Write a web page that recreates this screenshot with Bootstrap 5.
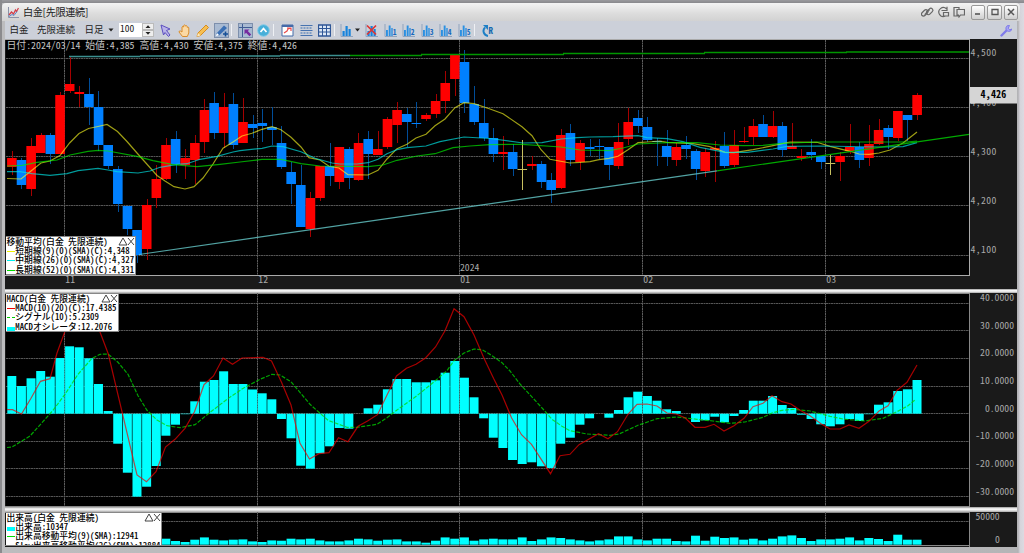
<!DOCTYPE html>
<html lang="ja">
<head>
  <meta charset="UTF-8" />
  <meta name="viewport" content="width=device-width, initial-scale=1.0" />
  <title>白金[先限連続]</title>
  <link href="https://cdn.jsdelivr.net/npm/bootstrap@5.3.0/dist/css/bootstrap.min.css" rel="stylesheet">
  <style>
    body { width: 1024px; height: 553px; overflow: hidden; font-family: "Noto Sans CJK JP", sans-serif; color: #222; line-height: 1; }
    .chart-window { height: 553px; padding: 3px 7px 6px 5px; background: linear-gradient(90deg, #8b8b8e 0, #8b8b8e 2px, #bcbcbe 2px, #bcbcbe 5px, #b5b5b7 1017px, #b2b2b5 1018px, #d5d3da 1020px, #dcdae1 100%); }
    .window-top { height: 3px; margin: -3px -7px 0 -3px; background: linear-gradient(#9a9a9e, #88888c); }
    .title-bar { height: 18px; margin: 0 -3px; padding: 0 2px 0 6px; background: linear-gradient(#f3f3f3, #dcdcdc 60%, #d2d2d2); border-radius: 4px 4px 0 0; }
    .title-text { font-size: 10.2px; letter-spacing: -.38px; margin-left: 4px; }
    .win-btn { width: 14.3px; height: 15px; border: 1px solid #999; border-radius: 2px; background: linear-gradient(#fff, #cfcfcf); margin-left: 2px; }
    .tool-bar { height: 18px; background: #ccd0d9; padding-left: 4.5px; font-size: 9.5px; }
    .tool-cell { width: 18.5px; height: 16px; flex: none; }
    .tool-cell.pressed > svg { background: #a9bad2; outline: 1px solid #7d8fac; }
    .tool-sep { width: 5.5px; height: 12px; flex: none; border-left: 1px solid #eef0f4; }
    .count-box { width: 23px; height: 14px; background: #fff; padding: 1px 0 0 1.5px; font-size: 9.5px; font-feature-settings: "hwid" 1; margin-left: 5px; }
    .pane { position: relative; flex: none; background: #1a1a1a; }
    .pane > svg { display: block; }
    .splitter { flex: none; background: linear-gradient(#999, #f4f4f4 35%, #f4f4f4 55%, #a8a8a8); }
    .half { font-feature-settings: "hwid" 1; }
    .legend-box { position: absolute; top: 0; left: 1px; padding-left: .5px; background: #fff; border: 1px solid #888; border-left: 0; color: #000; font-size: 8.8px; font-weight: 500; overflow: hidden; white-space: nowrap; }
    .legend-box > div { height: 9px; line-height: 9px; }
    .legend-box > div:nth-child(3) { height: 10px; line-height: 10px; }
    .legend-box .key { width: 8px; height: 1px; flex: none; margin: 5px .8px 0 0; }
    .legend-box .key.block { height: 4px; }
    svg text { font-family: "Noto Sans CJK JP", sans-serif; font-feature-settings: "hwid" 1; font-size: 9.7px; fill: #a8a8a8; white-space: pre; }
  </style>
</head>
<body>
  <div class="chart-window d-flex flex-column">
    <div class="window-top flex-shrink-0"></div>

    <div class="title-bar d-flex align-items-center flex-shrink-0">
      <svg width="11" height="11" viewBox="0 0 11 11"><path d="M.5 0v10.500h10.500" fill="none" stroke="#8b93a8"/><path d="M1 8l2.500-3 2 2 2-4 1 1.500 2-3.500" fill="none" stroke="#d33b45" stroke-width="1.200"/><path d="M1 9.500l3-2 2 1 3-4" fill="none" stroke="#5a8fd0"/></svg>
      <span class="title-text">白金[先限連続]</span>
      <svg class="ms-auto" width="44" height="12" viewBox="0 0 44 12" fill="none" stroke="#666" stroke-width="1.200">
        <g transform="rotate(-45 6 6)"><rect x="0" y="3" width="7.500" height="4" rx="2"/><rect x="4.500" y="5.500" width="7.500" height="4" rx="2"/><path d="M2.500 6.200h7"/></g>
        <path d="M25.500 2.800a4.500 4.500 0 1 0-1 7.200M20.500 4.500h5.500V.8M22.500 6.500h5v3.500h-5z"/>
        <path d="M38 3V1.500h-5v8.500h4M36 3.500h7.500v5.500h-4l-1.500 2-.5-2h-1.500z"/>
      </svg>
      <div class="win-btn d-flex align-items-center justify-content-center" style="margin-left:6px"><svg width="8" height="8"><path d="M1 6h5" stroke="#555" stroke-width="1.600"/></svg></div>
      <div class="win-btn d-flex align-items-center justify-content-center"><svg width="8" height="8"><path d="M1 1.500h6v5h-6z" fill="none" stroke="#555" stroke-width="1.300"/></svg></div>
      <div class="win-btn d-flex align-items-center justify-content-center"><svg width="8" height="8"><path d="M1 1l6 6M7 1l-6 6" stroke="#555" stroke-width="1.500"/></svg></div>
    </div>

    <div class="tool-bar d-flex align-items-center flex-shrink-0">
      <span style="width:27.500px">白金</span><span style="width:47.500px">先限連続</span><span>日足</span>
      <svg width="6" height="4" class="ms-1"><path d="M.5.500h5l-2.500 3z" fill="#222"/></svg>
      <div class="count-box">100</div>
      <svg width="12" height="14" viewBox="0 0 12 14"><rect x=".5" y=".5" width="11" height="6" fill="#eee" stroke="#bbb"/><rect x=".5" y="7.500" width="11" height="6" fill="#eee" stroke="#bbb"/><path d="M3.500 5h5L6 2.200zM3.500 9h5L6 11.800z" fill="#222"/></svg>
      <div id="tools" class="d-flex align-items-center" style="margin-left:3px"></div>
      <svg class="ms-auto me-1" width="13" height="13" viewBox="0 0 13 13"><path d="M1.500 11.500l5-5" stroke="#7f7bea" stroke-width="2.400" stroke-linecap="round"/><path d="M9.500 1.500a3 3 0 1 0 2.300 3.500l-2 .8-1.600-1.500z" fill="#a8a5f5" stroke="#7f7bea"/></svg>
    </div>

    <div class="pane" style="height:250px">
      <svg id="price" width="1012" height="250" viewBox="5 39 1012 250"></svg>
      <div class="legend-box half" style="top:197px;width:130px;height:39px">
        <div class="d-flex justify-content-between"><span>移動平均(白金 先限連続)</span><svg width="17" height="9"><path d="M1 8h8L5 1zM10 1l6 7M16 1l-6 7" fill="none" stroke="#444"/></svg></div>
        <div class="d-flex"><i class="key" style="background:#ee0"></i>短期線(9)(0)(SMA)(C):4,348</div>
        <div class="d-flex"><i class="key" style="background:#0ee"></i>中期線(26)(0)(SMA)(C):4,327</div>
        <div class="d-flex"><i class="key" style="background:#0d0"></i>長期線(52)(0)(SMA)(C):4,331</div>
      </div>
    </div>
    <div class="splitter" style="height:4px"></div>

    <div class="pane" style="height:214px">
      <svg id="macd" width="1012" height="214" viewBox="5 293 1012 214"></svg>
      <div class="legend-box half" style="width:113px;height:39px">
        <div class="d-flex justify-content-between"><span>MACD(白金 先限連続)</span><svg width="17" height="9"><path d="M1 8h8L5 1zM10 1l6 7M16 1l-6 7" fill="none" stroke="#444"/></svg></div>
        <div class="d-flex"><i class="key" style="background:#e00"></i>MACD(10)(20)(C):17.4385</div>
        <div class="d-flex"><i class="key" style="border-top:1px dashed #0c0"></i>シグナル(10):5.2309</div>
        <div class="d-flex"><i class="key block" style="background:#0ff"></i>MACDオシレータ:12.2076</div>
      </div>
    </div>
    <div class="splitter" style="height:5px"></div>

    <div class="pane" style="height:35px">
      <svg id="volume" width="1012" height="35" viewBox="5 512 1012 35"></svg>
      <div class="legend-box half" style="width:156px;height:34px">
        <div class="d-flex justify-content-between"><span>出来高(白金 先限連続)</span><svg width="17" height="9"><path d="M1 8h8L5 1zM10 1l6 7M16 1l-6 7" fill="none" stroke="#444"/></svg></div>
        <div class="d-flex"><i class="key block" style="background:#0ff"></i>出来高:10347</div>
        <div class="d-flex"><i class="key" style="background:#0d0"></i>出来高移動平均(9)(SMA):12941</div>
        <div class="d-flex"><i class="key" style="background:#e0e"></i>Slow出来高移動平均(26)(SMA):12884</div>
      </div>
    </div>
  </div>

  <script src="https://cdn.jsdelivr.net/npm/bootstrap@5.3.0/dist/js/bootstrap.bundle.min.js"></script>
  <script>
    // ---- toolbar icons ----
    const bars = '<path d="M1 0v12.500h12" fill="none" stroke="#8fa3bd"/><path d="M2.500 12V7h2.200v5zM5.500 12V2h2.200v10zM8.500 12V5h2.200v7z" fill="#1683dc"/>';
    const barsNum = n => `<path d="M1 0v12.500h12" fill="none" stroke="#8fa3bd"/><path d="M2 12V6h1.900v6zM4.700 12V1.500h1.900V12zM7.300 12V4h1.400v8z" fill="#2b90e2"/><text x="8.700" y="11" style="font-size:7.500px;font-weight:bold;fill:#1668bd">${n}</text>`;
    const icons = [
      '<path d="M2 1l9 4-3.500 1.500L11 11l-1.500 1.500L6 8.500 4.500 11z" fill="#b9b3e8" stroke="#5c4fc0"/>',
      '<path d="M4.500 12.500L1 8q0-1.500 1.500-1L4 8V3q1-1.500 1.700 0V1.500q1-1.200 1.700 0V2q1-1 1.700.3v1q1-.8 1.700.4V9l-1.500 3.500z" fill="#fbd9a4" stroke="#d98d2b"/>',
      '<path d="M1 12.500l1-3.500 8-8 2.500 2.500-8 8z" fill="#f6bf52" stroke="#d58c22"/><path d="M1 12.500l1-3.500 2.500 2.500z" fill="#fbe8bf"/>',
      '!<path d="M1 10l8-8.500L12 4l-8 7.500z" fill="#3a6fb4"/><path d="M1 12l1-3 2 2z" fill="#fff"/><path d="M8 10h5M10.500 7.500v5" stroke="#164f96" stroke-width="1.600"/>',
      '|',
      '!<path d="M3.500 0v13M0 3.500h13" stroke="#3e5c94"/><path d="M5.500 5.500h5L8.800 7l3.400 3.500-1.700 1.700L7 8.800 5.500 10.500z" fill="#762b9f"/>',
      '<circle cx="6.500" cy="6.500" r="5.800" fill="#47afd9" stroke="#83cae6"/><path d="M3.500 8l3-3.500 3 3.500" fill="none" stroke="#fff" stroke-width="1.700"/>',
      '|',
      '<path d="M1 1h11v11H1z" fill="#fff" stroke="#456aa8"/><path d="M1 2h11" stroke="#456aa8" stroke-width="2"/><path d="M3 9l3-2 1-2 3-1M6 4h4v3" fill="none" stroke="#e84c4c" stroke-width="1.200"/>',
      '<path d="M.5 1.500h12M.5 6.500h12M.5 11.500h12" stroke="#4773af" stroke-width="1.200"/><path d="M.5 4h12M.5 9h12" stroke="#6b8fc0" stroke-width="1.500" stroke-dasharray="2 1"/>',
      '<path d="M.5 1h12v11H.5z" fill="#dce7f5" stroke="#2e5697" stroke-width="1.300"/><path d="M.5 4.500h12M.5 8h12M4.500 1v11M8.500 1v11" stroke="#2e5697"/>',
      '|',
      'v' + bars,
      bars + '<path d="M2 1.500l9 9M11 1.500l-9 9" stroke="#dd3434" stroke-width="1.700"/>',
      barsNum(1), barsNum(2), barsNum(3), barsNum(4), barsNum(5),
      '|',
      '<path d="M6 12A5 5 0 0 1 3 3.500" fill="none" stroke="#1d7fc6" stroke-width="2"/><path d="M1 1h5v5z" fill="#1d7fc6"/><text x="6.500" y="10" style="font-size:9px;font-weight:bold;fill:#1668ad">R</text>'
    ];
    document.getElementById("tools").innerHTML = icons.map(s => {
      if (s === '|') return '<div class="tool-sep"></div>';
      const pressed = s[0] === '!', caret = s[0] === 'v';
      if (pressed || caret) s = s.slice(1);
      const svg = `<svg width="13" height="13" viewBox="0 0 13 13">${s}</svg>`;
      if (caret) return `<div class="tool-cell d-flex align-items-center" style="width:23px">${svg}<svg width="5" height="4" style="margin-left:2px"><path d="M0 .5h5l-2.500 3z" fill="#222"/></svg></div>`;
      return `<div class="tool-cell d-flex align-items-center justify-content-center${pressed ? ' pressed' : ''}">${svg}</div>`;
    }).join("");

    // ---- shared chart helpers ----
    const cx = i => 11.8 + 9.63 * i;
    const months = [[64.5, "11"], [257.5, "12"], [459.5, "01"], [642.5, "02"], [825.5, "03"]];
    const hline = y => `<path d="M6 ${y}H969" stroke="#555" stroke-dasharray="2 .5"/>`;
    const vlines = (a, b) => months.map(m => `<path d="M${m[0]} ${a}V${b}" stroke="#5e5e5e" stroke-dasharray="2 .5"/>`).join("");
    const poly = (pts, color, extra = "") => `<polyline points="${pts}" fill="none" stroke="${color}" stroke-width="1.200" ${extra}/>`;

    // ---- candles: colour, high, body top, body bottom, low ----
    const candles = `r 151 158 167 175|b 158 160 185 189|r 138 146 189 196|r 133 135 153 153|b 133 135 154 164|r 92 95 154 154|r 57 84 91 93|r 86 92 94 107|b 78 94 107 125|b 91 107 145 151|b 145 145 166 169|b 166 169 204 212|b 206 206 229 235|b 230 230 255 263|r 199 205 249 260|r 165 179 198 208|r 138 145 179 180|b 131 139 164 173|r 149 158 165 179|r 135 143 160 184|r 99 110 142 153|b 92 103 133 139|r 93 107 133 148|b 93 104 145 149|r 98 122 143 143|b 115 124 128 138|b 109 123 126 142|b 107 127 130 145|b 126 143 167 169|b 162 172 184 204|b 165 185 227 227|r 192 198 229 237|r 166 166 198 201|b 143 166 176 186|r 147 147 182 189|b 147 149 178 189|r 133 143 180 181|b 131 139 154 179|r 131 149 155 155|r 117 119 147 149|r 102 110 125 143|b 108 114 122 147|b 102 123 124 128|r 113 115 119 121|r 94 101 114 118|r 71 83 101 113|r 55 55 79 96|b 50 62 103 113|b 86 104 122 125|b 99 123 138 141|b 128 138 154 162|r 136 152 154 170|b 144 152 169 176|y 140 169 169 190|r 156 164 166 170|b 161 164 182 188|b 173 180 190 203|r 129 135 188 189|b 124 133 160 166|r 140 143 162 170|b 139 147 149 156|b 139 146 147 159|b 147 147 165 180|r 123 142 166 169|r 108 122 139 145|b 110 118 126 133|b 117 127 140 142|b 138 141 142 166|b 130 146 157 166|r 143 147 160 166|b 136 145 149 159|b 149 151 169 180|r 148 152 171 177|r 141 148 150 182|b 132 146 166 168|r 130 145 165 167|r 127 141 142 143|r 119 126 137 145|b 115 124 137 137|r 111 126 137 138|b 122 126 150 157|r 123 146 149 149|r 149 156 158 161|b 139 152 155 160|b 156 156 162 169|y 155 163 163 175|r 152 156 162 181|r 124 147 151 154|b 142 147 160 168|r 125 144 158 166|r 119 130 144 145|b 125 128 137 149|r 111 111 138 141|b 115 115 120 141|r 93 95 115 120`.split("|");
    const body = { r: "#f00", b: "#0080ff", y: "#c8c060" };
    const wick = { r: "#a50000", b: "#004d99", y: "#c8c060" };
    const candleSvg = candles.map((c, i) => {
      const [k, h, t, b, l] = c.split(" ");
      return `<path d="M${Math.round(cx(i)) + .5} ${h}V${l}" stroke="${wick[k]}"/><rect x="${cx(i) - 4.700}" y="${t}" width="9.600" height="${Math.max(1, b - t)}" fill="${body[k]}"/>`;
    }).join("");

    const sma9 = "7,178.5 21,179 31,171 41,163 50,161 60,155.5 69.6,143 79,133.5 88.5,128.5 98,126.5 107,124.5 117.5,131.5 127,141.5 137,153 145,162 157,175.5 165,181 174,186.7 185,189 194,186.7 203,178 213,164 223,148.3 233,142 242,136 252,133.3 262,129.3 272,126.7 281,129.7 291,137.3 301,147 309,157.7 320,160 329,166.3 339,168 348,174.7 368,175 378,170.3 387,159 397,148.7 407,144.3 416,138 426,134.3 435,125.7 445,119 455,107.7 464,102.7 474,103.7 490,109 503,113.7 522,126.7 532,135.7 541,149.7 550,159.3 570,163 580,162.3 590,161.7 599,159.7 609,158.3 618,156.3 628,149.7 638,142.7 647,142 660,141 667,142.3 693,143.7 710,146.7 725,152.3 734,152.7 753,149.7 773,145.7 790,142 817,142.3 830,146.3 850,151.3 859,154 869,154.3 879,153 890,150 903,143 917,132";
    const sma26 = "7,171.7 20,171.7 32,173.7 50,175.3 67,173.7 78,170.7 98,168.3 108,170 117,171.7 138,173 150,171 160,167.3 177,164.3 187,163.7 200,159.3 217,156.3 233,152 240,150.7 262,148.3 272,146 283,146.7 301,151.7 315,158.3 332,163 340,164 357,164 368,162.7 378,159.3 387,153.7 397,149.7 407,147.7 426,146 440,141.7 464,137 490,138.5 523,143 542,142.7 561,139 577,137.7 590,137 613,136.7 638,135.7 647,137.7 667,138.7 683,141.7 700,147.3 725,152.3 747,152.3 773,149 787,146.3 820,146 879,147 903,146.7 917,142.7";
    const sma52 = "7,166 22,165.3 37,162.3 57,160 70,155 88,151.3 98,150.3 108,151 137,156.3 153,160.7 173,164.7 197,166.7 220,164.3 240,162 262,159.3 281,159.3 301,163.7 320,166 368,166.7 383,165 397,160.3 417,156 435,153.7 453,147.7 470,146 490,144.7 522,144.3 561,147 580,150 609,150.7 623,148 638,144 667,142.7 697,142.7 720,145 743,145.7 763,145.3 782,143.3 817,142 907,142 917,141";

    document.getElementById("price").innerHTML =
      `<rect x="6" y="40" width="963" height="235" fill="#000"/><path d="M5 39.500H970M5 275.500H970M969.500 39V276" stroke="#aaa"/>` +
      [58.5, 107.5, 156.5, 205.5, 255.5].map(hline).join("") + vlines(40, 275) + candleSvg +
      poly(sma9, "#ffff20", 'opacity=".62"') + poly(sma26, "#00e5e5", 'opacity=".68"') + poly(sma52, "#00ee00", 'opacity=".68"') +
      poly("139,254.500 717,170.800", "#6cc", 'opacity=".8"') + poly("717,170.800 969,134.300", "#00c800", 'opacity=".85"') +
      '<path d="M69 56.500H140M140 56H280M280 55.500H350" stroke="#3b8f8f" stroke-width="1.600"/><path d="M350 55.500H422M421 54.500H564M563 53.500H705M704 52.500H847M846 52H969" stroke="#009600" stroke-width="1.600"/>' +
      '<text x="6.500" y="49" style="fill:#c4c4c4;font-size:9.850px">日付:2024/03/14 始値:4,385 高値:4,430 安値:4,375 終値:4,426</text>' +
      [["4,500", 56], ["4,400", 105.500], ["4,300", 155], ["4,200", 203.500], ["4,100", 253]].map(a => `<text x="970.500" y="${a[1]}" letter-spacing=".4">${a[0]}</text>`).join("") +
      '<rect x="970" y="87" width="47" height="16.500" fill="#d5d5d5"/><text x="980.500" y="98" letter-spacing=".2" style="fill:#000;font-weight:bold;font-size:10px">4,426</text>' +
      '<text x="460" y="271">2024</text>' + months.map(m => `<text x="${m[0] + .8}" y="283">${m[1]}</text>`).join("");

    // ---- MACD ----
    const zero = 413.7;
    const osc = [376,386,378.3,371,376.7,358,346.3,347.3,358.3,384,411,443.7,472.7,496.7,486.7,466,435.7,424.7,414.2,401.3,381.7,380,371.3,384,384,389.5,393.3,399.3,419,438.3,465.7,468.7,453.3,446.3,428,428.7,413.7,408.3,404.7,389.3,379,379,382.3,382.3,380.3,372.7,361,377.7,397.3,418.3,437.7,448,460,464,462.3,466.3,468,443.7,437.7,424.7,418.3,413.7,417.7,410,397.3,391.7,396,400.7,409.3,411,413.7,422,420.3,416.7,422.3,416,410,400.7,400.7,396,405,408,414.7,419,424.3,426.3,424.3,419,421,414.2,404.7,402.3,391,389.3,380];
    const macdLine = "7,409.7 12.5,409.7 21.5,414 31,398.3 40.5,381.3 50,378.7 57,353 64.7,332 70,318 79,311 89,313 100,332 108.3,354 137,475 146.5,481.7 156,471.7 165.5,447 175,439.3 185,428.3 194.5,411.7 204,384.7 213.5,376 223,358 232.5,364.3 242,358 263,357.3 271.5,361 281.5,382.3 291,405 300,443.3 309.5,459 319,453.7 329,452.7 338.5,437.7 348,441.7 358,426.3 367.5,421 377.5,414.7 387,395 396.5,376 406.5,368.3 416,364.3 425.5,358 435.5,347 445,330.7 454,308.7 464,316.7 474,335 484,358.3 493.5,378.3 502,395 511.5,417.7 521.5,434.7 531.5,444.3 550.5,473.7 560,455.7 570,454.3 579,444.7 598.5,433.7 608,438.7 617.5,431.7 628,414.3 637,404.3 647,404 657,406 667,413 676,414 685,417.7 695,427.3 705,427.3 714,424.3 724,431 734,425.7 744,418.3 753,406.7 763,403.3 772,395.7 782,401.7 791,404 801,410.7 810,415.7 821,423.7 830,429 840,429 849,425 859,428.3 869,421.3 879,411 888,405.7 897,390.3 907,382.3 917,365";
    const signal = "7,447.500 12,447 30,436 42,422.7 53,410.3 65,394.3 78,374.3 92,358.3 100,354.3 108,354 118,362.3 128,374.3 138,395.7 147,410.3 157,420 167,425.7 180,427.7 195,424.7 208,414 227,399.3 242,389 260,379.3 272,374.3 280,375 291,381.7 310,404.3 328,420.3 347,427.3 357,427.3 377,424.3 387,417.7 397,410 417,395.7 435,381 447,370.7 454,360.7 464,353 474,349 482,349.7 491,355 502,362.7 510,371 520,384 543,409 552,419.3 562,426.3 570,430.7 587,434 610,435.3 619,434 638,425.3 657,418.7 677,417 697,419.3 713,421 730,423.3 745,422 763,417.3 772,413 782,410.3 793,409.3 810,411 830,416.3 843,419 865,421 883,418.3 897,411.7 908,405.7 915,400";
    const bar = (i, a, b) => `<rect x="${cx(i) - 4.500}" y="${Math.min(a, b)}" width="9" height="${Math.abs(a - b)}" fill="#0ff"/>`;

    document.getElementById("macd").innerHTML =
      `<rect x="6" y="294" width="963" height="212" fill="#000"/><path d="M5 293.500H970M5 506.500H970M969.500 293V507" stroke="#888"/>` +
      [303.5, 330.5, 358.5, 386.5, 413.5, 441.5, 468.5, 496.5].map(hline).join("") + vlines(293, 506) +
      osc.map((y, i) => bar(i, y, zero)).join("") +
      poly(signal, "#00d800", 'stroke-dasharray="4 1.500" opacity=".75"') + poly(macdLine, "#f00000", 'opacity=".7"') +
      ["40.0000", "30.0000", "20.0000", "10.0000", "0.0000", "-10.0000", "-20.0000", "-30.0000"].map((t, k) => `<text x="1014" y="${300.8 + k * 27.700}" text-anchor="end">${t}</text>`).join("");

    // ---- volume, first bar sits right of the legend ----
    const vol = [6,3.7,2.7,5,7.3,5,4.3,5,5.3,3.3,2.7,4.3,4,6,5.3,6,4.3,3.3,3.3,4.3,6,5.3,4,5,5.3,3.3,3.3,2,4,7.3,6,7.3,4,5.3,6,5.3,5.3,7.3,3.7,5.3,7.3,6.7,5.3,4.3,3.3,4.3,5.3,8.3,8.3,5.3,4.3,6,6,3.7,3.3,9,4,8,6.7,7.3,5,6,4.3,6,8.3,9.3,6.7,3.7,5.3,5.3,6,7.3,4.3,6.7,5.7,3.7,10,5,5];
    document.getElementById("volume").innerHTML =
      `<rect x="6" y="513" width="963" height="33" fill="#000"/><path d="M5 512.500H970M5 545.500H970M969.500 512V547" stroke="#888"/>` +
      hline(521.5) + vlines(512, 546) + vol.map((h, i) => bar(i + 16, 544.700 - h, 544.700)).join("") +
      '<text x="975.500" y="520">50000</text><text x="995" y="543">0</text>';
  </script>
</body>
</html>
